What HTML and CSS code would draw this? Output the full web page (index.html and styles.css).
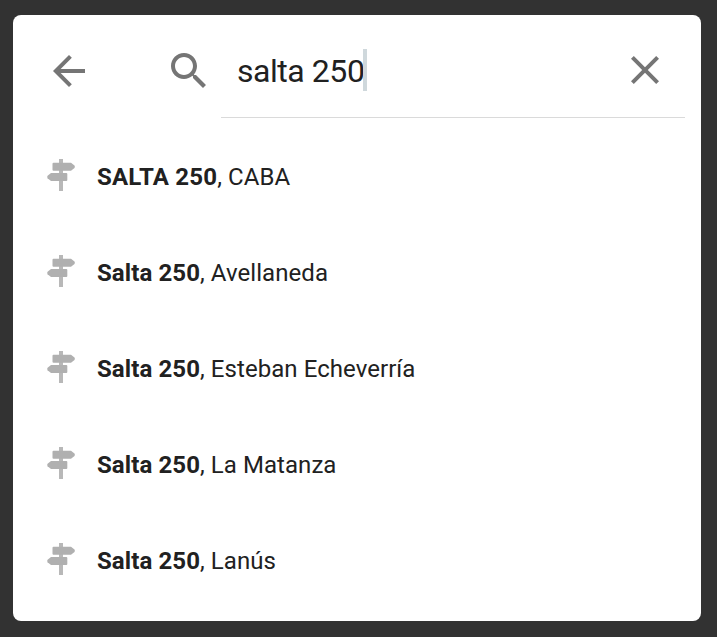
FILE: index.html
```html
<!DOCTYPE html>
<html lang="es">
<head>
<meta charset="utf-8">
<title>Buscar</title>
<link rel="stylesheet" href="styles.css">
</head>
<body>
<svg class="defs" width="0" height="0">
  <symbol id="sign" viewBox="0 0 28 32">
    <path class="pole" d="M12 0h4v32h-4z"/>
    <path d="M6.500 3.700h17.500l3.500 2.800q.7 1.200 0 2.400l-3.500 2.900H6.500a1 1 0 0 1-1-1V4.700a1 1 0 0 1 1-1z"/>
    <path d="M4 14h15.300a1 1 0 0 1 1 1v6a1 1 0 0 1-1 1H4L.6 19.200q-.7-1.200 0-2.400z"/>
  </symbol>
</svg>
<main class="card">
  <header class="search">
    <svg class="icon back" viewBox="0 0 24 24"><path d="M20 11H7.83l5.59-5.59L12 4l-8 8 8 8 1.41-1.41L7.83 13H20v-2z"/></svg>
    <svg class="icon lens" viewBox="0 0 24 24"><path d="M15.5 14h-.79l-.28-.27C15.41 12.59 16 11.11 16 9.5 16 5.91 13.09 3 9.5 3S3 5.91 3 9.5 5.91 16 9.5 16c1.61 0 3.09-.59 4.23-1.57l.27.28v.79l5 4.99L20.49 19l-4.99-5zm-6 0C7.01 14 5 11.99 5 9.5S7.01 5 9.5 5 14 7.01 14 9.5 11.99 14 9.5 14z"/></svg>
    <div class="field">
      <span class="query">salta 250</span><span class="caret"></span>
      <svg class="icon clear" viewBox="0 0 24 24"><path d="M19 6.41L17.59 5 12 10.59 6.41 5 5 6.41 10.59 12 5 17.59 6.41 19 12 13.41 17.59 19 19 17.59 13.41 12z"/></svg>
    </div>
  </header>
  <ul class="results">
    <li><svg class="sign"><use href="#sign"/></svg><span><b class="caps">SALTA 250</b>, CABA</span></li>
    <li><svg class="sign"><use href="#sign"/></svg><span><b>Salta 250</b>, Avellaneda</span></li>
    <li><svg class="sign"><use href="#sign"/></svg><span><b>Salta 250</b>, Esteban Echeverría</span></li>
    <li><svg class="sign"><use href="#sign"/></svg><span><b>Salta 250</b>, La Matanza</span></li>
    <li><svg class="sign"><use href="#sign"/></svg><span><b>Salta 250</b>, Lanús</span></li>
  </ul>
</main>
</body>
</html>
```
FILE: styles.css
```css
* { box-sizing: border-box; }
body {
  margin: 0;
  height: 637px;
  padding: 15px 16px 16px 13px;
  background: #323232;
  color: #212121;
  font-family: Roboto, sans-serif;
  overflow: hidden;
}
.defs { display: block; height: 0; }
.card {
  height: 606px;
  background: #fff;
  border-radius: 8px;
}
.search {
  display: flex;
  align-items: flex-start;
  height: 103px;
  padding: 0 16px 0 32px;
}
.icon {
  flex: none;
  width: 48px;
  height: 48px;
  fill: #757575;
}
.back { margin-top: 32px; }
.lens { margin: 32px 8px 0 72px; }
.field {
  flex: 1;
  display: flex;
  align-items: center;
  height: 103px;
  padding: 8px 16px 0;
  border-bottom: 1px solid #dadada;
}
.query {
  padding-top: 2px;
  font-size: 32px;
  line-height: 42px;
  letter-spacing: -0.45px;
  white-space: pre;
}
.caret {
  width: 4px;
  height: 42px;
  margin-left: -1px;
  background: #cfd8dc;
}
.clear { margin: 0 0 0 auto; }
.results {
  margin: 11px 0 0;
  padding: 0;
  list-style: none;
}
.results li {
  display: flex;
  align-items: center;
  height: 96px;
  padding-left: 34px;
  font-size: 24px;
  line-height: 32px;
  letter-spacing: 0.06px;
}
.sign {
  width: 28px;
  height: 32px;
  margin: 0 22px 4px 0;
  fill: #b0b0b0;
}
.pole { fill: #b8b8b8; }
.results b { font-weight: 700; letter-spacing: 0.09px; }
.results .caps { letter-spacing: 0.22px; }
```
